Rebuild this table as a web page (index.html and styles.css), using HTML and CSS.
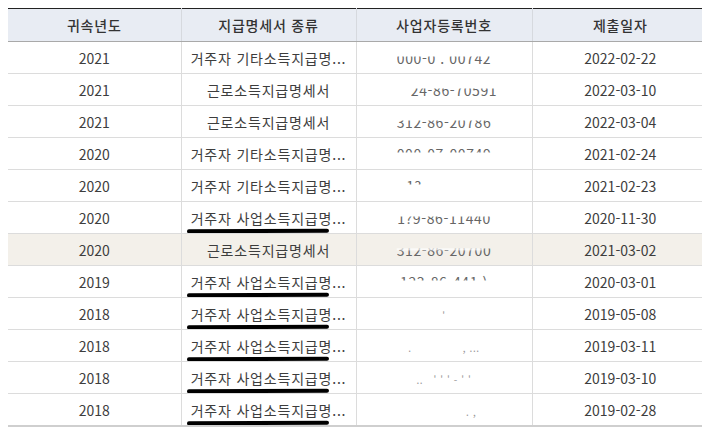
FILE: index.html
```html
<!DOCTYPE html>
<html lang="ko">
<head>
<meta charset="utf-8">
<link rel="stylesheet" href="styles.css">
</head>
<body>
<table class="grid">
  <colgroup><col class="c1"><col class="c2"><col class="c3"><col class="c4"></colgroup>
  <thead>
    <tr><th>귀속년도</th><th>지급명세서 종류</th><th>사업자등록번호</th><th>제출일자</th></tr>
  </thead>
  <tbody>
    <tr><td>2021</td><td class="ko">거주자 기타소득지급명...</td><td><span class="reg cut-top">000-0 . 00742</span></td><td>2022-02-22</td></tr>
    <tr><td>2021</td><td class="ko">근로소득지급명세서</td><td><span class="reg cut-top shift">24-86-70591</span></td><td>2022-03-10</td></tr>
    <tr><td>2021</td><td class="ko">근로소득지급명세서</td><td><span class="reg cut-top">312-86-20786</span></td><td>2022-03-04</td></tr>
    <tr><td>2020</td><td class="ko">거주자 기타소득지급명...</td><td><span class="reg cut-bottom">000-07-00749</span></td><td>2021-02-24</td></tr>
    <tr><td>2020</td><td class="ko">거주자 기타소득지급명...</td><td><span class="reg cut-bottom short">1?</span></td><td>2021-02-23</td></tr>
    <tr><td>2020</td><td class="ko"><span class="mark">거주자 사업소득지급명...</span></td><td><span class="reg cut-top">1?9-86-11440</span></td><td>2020-11-30</td></tr>
    <tr class="sel"><td>2020</td><td class="ko">근로소득지급명세서</td><td><span class="reg cut-top blob">312-86-20700</span></td><td>2021-03-02</td></tr>
    <tr><td>2019</td><td class="ko"><span class="mark">거주자 사업소득지급명...</span></td><td><span class="reg cut-bottom">123-86-441 )</span></td><td>2020-03-01</td></tr>
    <tr><td>2018</td><td class="ko"><span class="mark">거주자 사업소득지급명...</span></td><td><span class="reg dots">'</span></td><td>2019-05-08</td></tr>
    <tr><td>2018</td><td class="ko"><span class="mark">거주자 사업소득지급명...</span></td><td><span class="reg dots">. &nbsp; &nbsp; &nbsp; &nbsp; &nbsp; &nbsp; &nbsp; , ...</span></td><td>2019-03-11</td></tr>
    <tr><td>2018</td><td class="ko"><span class="mark">거주자 사업소득지급명...</span></td><td><span class="reg dots">.. &nbsp; ' ' ' - ' '</span></td><td>2019-03-10</td></tr>
    <tr><td>2018</td><td class="ko"><span class="mark">거주자 사업소득지급명...</span></td><td><span class="reg dots">&nbsp; &nbsp; &nbsp; &nbsp; &nbsp; &nbsp; &nbsp; &nbsp; . ,</span></td><td>2019-02-28</td></tr>
  </tbody>
</table>
</body>
</html>
```
FILE: styles.css
```css
html, body { margin: 0; padding: 0; background: #fff; }
body { padding: 8px 0 0 8px; font-family: "Noto Sans CJK KR", "Noto Sans", sans-serif; overflow: hidden; }
.grid {
  border-collapse: collapse;
  table-layout: fixed;
  width: 700px;
  font-size: 14px;
  color: #3d3d3d;
  border-top: 1px solid #222;
  border-bottom: 2px solid #cfcfcf;
}
.c1 { width: 173px; }
.c2 { width: 175px; }
.c3 { width: 176px; }
.c4 { width: 176px; }
.grid th {
  height: 32px;
  padding: 0;
  background: #e8ecf3;
  font-weight: 500;
  color: #333;
  letter-spacing: 0.8px;
  border-bottom: 1px solid #a9a9a9;
  border-left: 1px solid #d6d9de;
  text-align: center;
}
.grid td {
  height: 31px;
  padding: 0;
  text-align: center;
  border-bottom: 1px solid #dcdcdc;
  border-left: 1px solid #dcdcdc;
  white-space: nowrap;
  overflow: hidden;
}
.grid td.ko { letter-spacing: 0.8px; }
.grid th:first-child, .grid td:first-child { border-left: none; }
.grid tr:last-child td { border-bottom: none; }
.sel td { background: #f3f0ea; }
.mark { position: relative; display: inline-block; }
.mark::after {
  content: "";
  position: absolute;
  left: -4px;
  right: 18px;
  bottom: -5px;
  height: 4px;
  border-radius: 2px;
  background: #000;
  transform: rotate(-0.3deg);
}
.reg { display: inline-block; color: #666; letter-spacing: 0.6px; }
.cut-top { clip-path: inset(45% 0 0 0); }
.cut-bottom { clip-path: inset(0 0 55% 0); }
.shift { margin-left: 20px; }
.short { margin-right: 60px; }
.blob { position: relative; }
.blob::before {
  content: "";
  position: absolute;
  left: -2px; right: 8px; top: 2px; height: 8px;
  background: #fff;
  filter: blur(1px);
}
.dots { color: #999; font-size: 10px; }
```
